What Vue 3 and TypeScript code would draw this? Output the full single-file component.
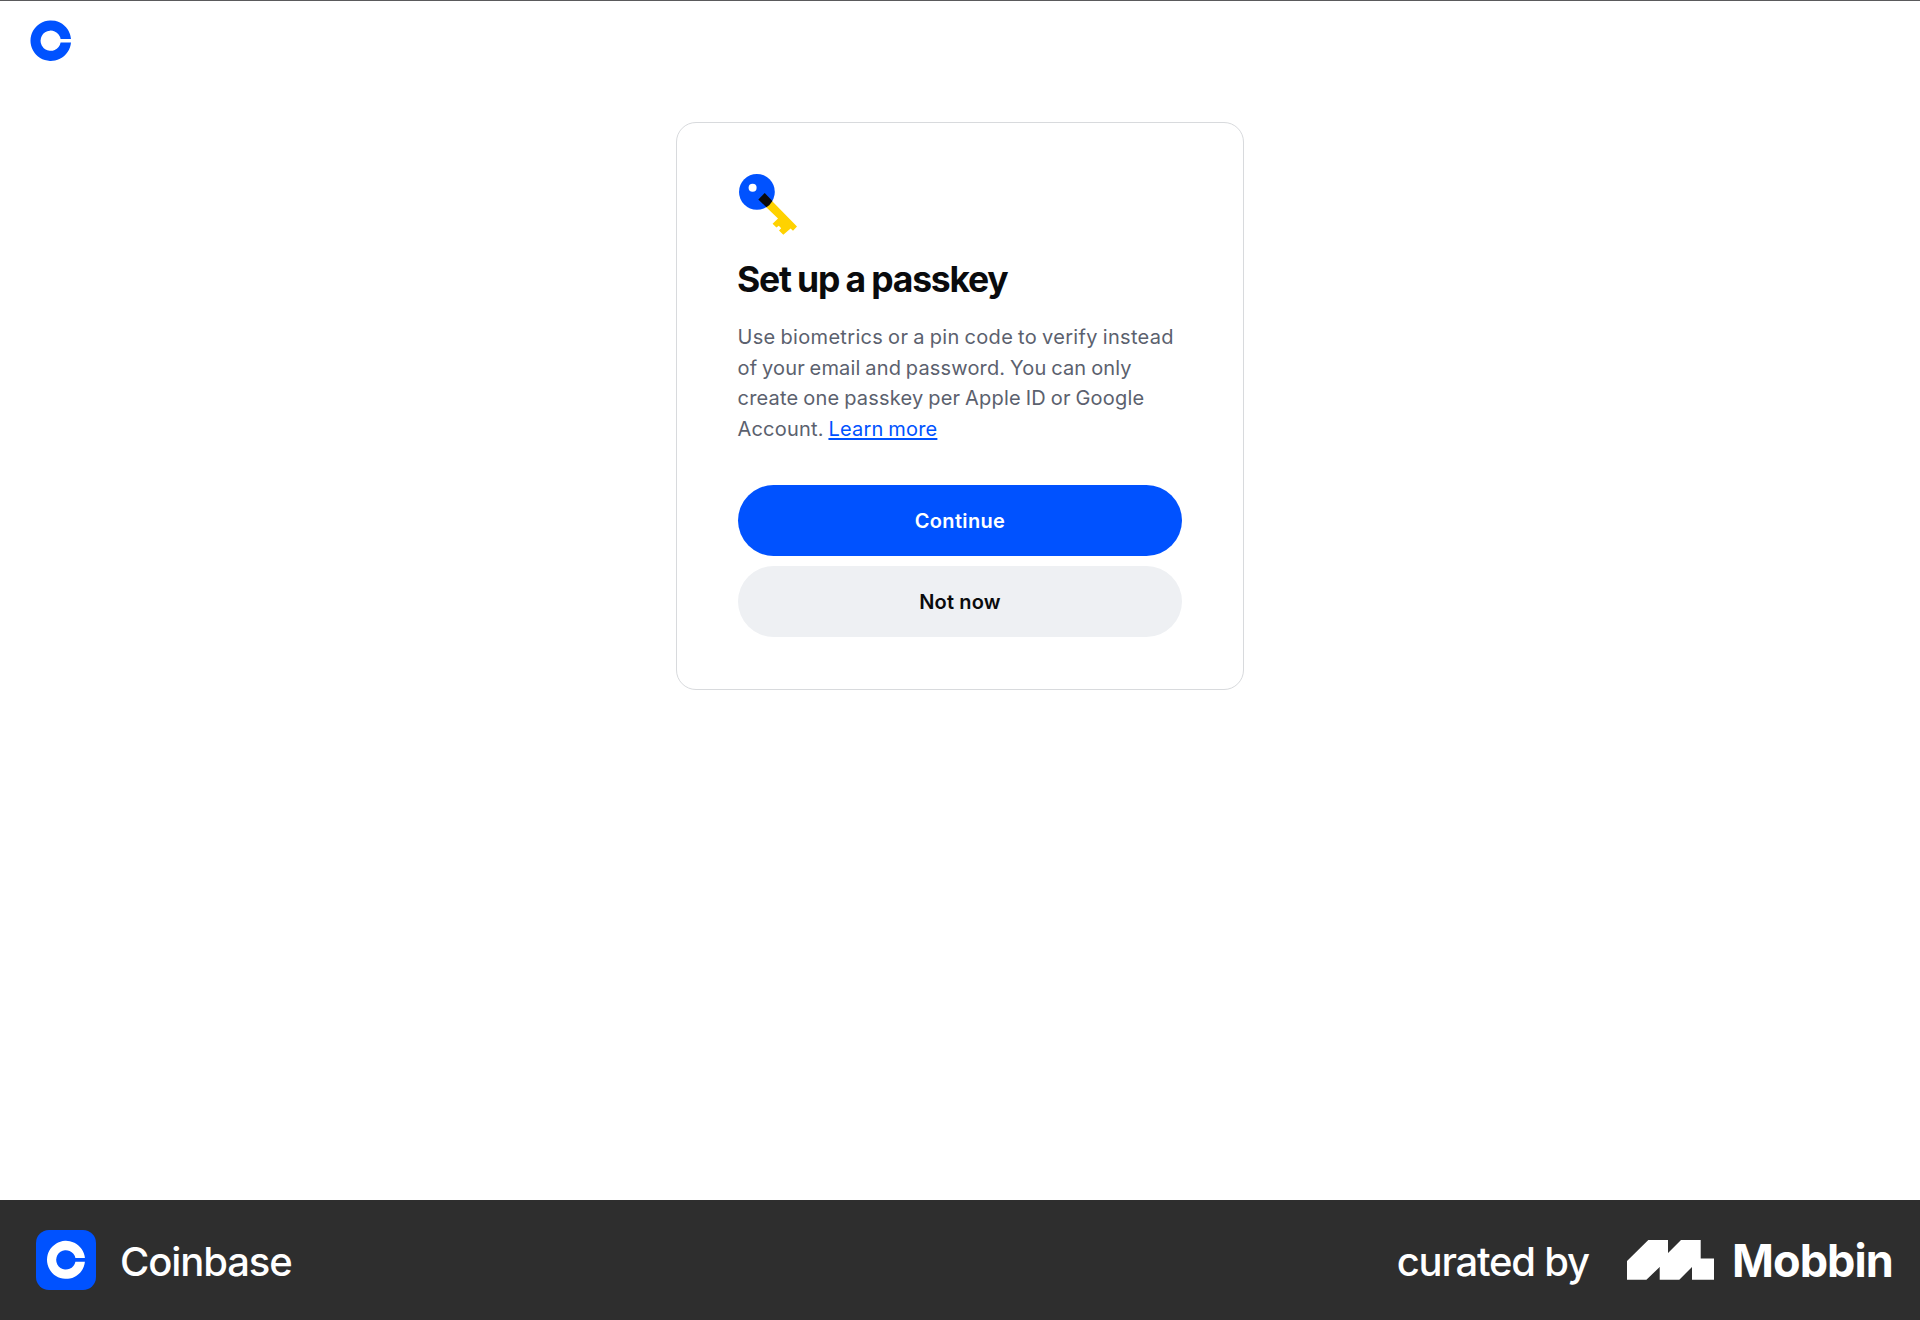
<script setup lang="ts">
interface Line {
  text: string
  cls: string
}

const lines: Line[] = [
  { text: 'Use biometrics or a pin code to verify instead', cls: 'l1' },
  { text: 'of your email and password. You can only', cls: 'l2' },
  { text: 'create one passkey per Apple ID or Google', cls: 'l3' },
]
</script>

<template>
  <div class="page">
    <header class="topbar">
      <svg class="logo" viewBox="0 0 42 42" width="42" height="42" aria-label="Coinbase">
        <path fill="#0052ff" fill-rule="evenodd" d="M41 19A20.3 20.3 0 1 0 41 22.4H30.6A10.1 10.1 0 1 1 30.6 19Z" />
      </svg>
    </header>

    <main class="content">
      <section class="card">
        <svg class="key" viewBox="738 173 60 63" width="60" height="63" aria-hidden="true">
          <circle cx="756.9" cy="191.9" r="17.9" fill="#0052ff" />
          <circle cx="752.6" cy="187.7" r="4" fill="#fff" />
          <path fill="#ffd200" d="M766 207L772 201L797 226.6L793 230.8L790.6 228.6L783.3 234.8L779 230.6L781.2 228.2L778.8 225.8L776.4 227.6L772.6 223.7L778 218.6Z" />
          <path fill="#0a0b0d" d="M764.7 193.1L758.3 199.4L766.4 207.3Q770.2 205 772.4 201Z" />
        </svg>
        <h1>Set up a passkey</h1>
        <p class="body">
          <span v-for="line in lines" :key="line.cls" :class="['line', line.cls]">{{ line.text }}</span>
          <span class="line l4">Account. <a href="#">Learn more</a></span>
        </p>
        <div class="actions">
          <button type="button" class="primary">Continue</button>
          <button type="button" class="secondary">Not now</button>
        </div>
      </section>
    </main>

    <footer class="footer">
      <div class="app">
        <svg viewBox="0 0 60 60" width="60" height="60" aria-hidden="true">
          <rect width="60" height="60" rx="13" fill="#0052ff" />
          <path fill="#fff" d="M48.9 28A19 19 0 1 0 48.9 31.7H39.4A9.7 9.7 0 1 1 39.4 28Z" />
        </svg>
        <span class="name">Coinbase</span>
      </div>
      <div class="credit">
        <span class="curated">curated by</span>
        <svg viewBox="1627 1240 87 40" width="87" height="40" aria-hidden="true">
          <path fill="#fff" d="M1627 1261L1648.3 1240H1668V1253L1681 1240H1700.7V1258.4H1714V1279.8H1692V1267L1679.3 1279.8H1659.7V1267L1646.4 1279.8H1627Z" />
        </svg>
        <span class="mobbin">Mobbin</span>
      </div>
    </footer>
  </div>
</template>

<style>
body {
  margin: 0;
  background: #fff;
}
</style>

<style scoped>
.page {
  box-sizing: border-box;
  width: 1920px;
  height: 1320px;
  display: flex;
  flex-direction: column;
  border-top: 1px solid #5a5a5c;
  background: #fff;
  font-family: Inter, "Liberation Sans", sans-serif;
  overflow: hidden;
}

.topbar {
  display: flex;
  height: 121px;
  padding: 19px 30px 0;
  box-sizing: border-box;
}

.logo {
  display: block;
}

.content {
  flex: 1;
}

.card {
  box-sizing: border-box;
  width: 568px;
  height: 568px;
  margin: 0 auto;
  padding: 50px 61px 0;
  border: 1px solid #d8dadd;
  border-radius: 20px;
}

.key {
  display: block;
}

h1 {
  margin: 22px 0 0 -1px;
  font-size: 35.5px;
  line-height: 44px;
  font-weight: 650;
  letter-spacing: -1.25px;
  word-spacing: -0.7px;
  color: #0a0b0d;
  white-space: nowrap;
}

.body {
  margin: 20px 0 0 -0.5px;
  font-size: 20px;
  line-height: 30.5px;
  color: #5b616e;
}

.line {
  display: block;
  white-space: nowrap;
  word-spacing: -1px;
}

.l1 {
  letter-spacing: 0.32px;
}

.l2 {
  letter-spacing: 0.16px;
}

.l3 {
  letter-spacing: 0.2px;
}

.l4 {
  letter-spacing: 0.19px;
}

a {
  color: #0052ff;
  text-decoration: underline;
  text-decoration-thickness: 1.5px;
  text-underline-offset: 2px;
}

.actions {
  display: flex;
  flex-direction: column;
  gap: 10px;
  margin-top: 41px;
}

button {
  height: 71px;
  padding: 2px 0 0;
  border: 0;
  border-radius: 36px;
  font: 600 20px/69px Inter, "Liberation Sans", sans-serif;
}

.primary {
  background: #0052ff;
  color: #fff;
  letter-spacing: 0.35px;
}

.secondary {
  background: #eef0f3;
  color: #0a0b0d;
  letter-spacing: 0.15px;
}

.footer {
  box-sizing: border-box;
  height: 120px;
  padding: 0 27px 0 36px;
  display: flex;
  align-items: center;
  justify-content: space-between;
  background: #2e2e2e;
  color: #fff;
}

.app,
.credit {
  display: flex;
  align-items: center;
}

.name {
  margin-left: 24px;
  padding-top: 2px;
  font-size: 40px;
  font-weight: 500;
  letter-spacing: -1.1px;
}

.curated {
  margin-right: 38px;
  padding-top: 2px;
  font-size: 40px;
  font-weight: 500;
  letter-spacing: -1.2px;
}

.mobbin {
  margin-left: 18px;
  font-size: 45px;
  font-weight: 700;
  letter-spacing: -0.9px;
}
</style>
